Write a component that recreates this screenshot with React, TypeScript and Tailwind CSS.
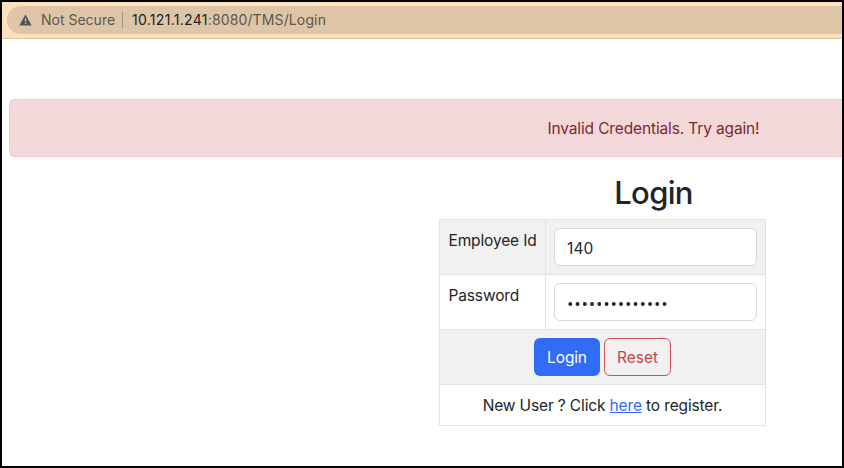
import React from "react";

function AddressBar() {
  return (
    <header className="flex h-[37px] shrink-0 flex-col border-b border-[#dcc4a6] bg-[#ffe0bd] pt-1 pl-[5px]">
      <div className="flex h-7 items-center rounded-l-full bg-[#dec5a7] pl-3 text-[14px] leading-5">
        <svg width="13" height="12" viewBox="0 0 13 12" className="shrink-0">
          <path d="M6.5 0.5 L12.7 11.5 H0.3 Z" fill="#515358" />
          <path d="M5.9 4.2 h1.3 v3.4 h-1.3 z M5.9 8.7 h1.3 v1.4 h-1.3 z" fill="#dec5a7" />
        </svg>
        <span className="ml-[9px] w-[74px] whitespace-nowrap text-[#5a5754]">Not Secure</span>
        <span className="ml-[7px] h-4 w-px bg-[#a09484]" />
        <span className="ml-[9px] whitespace-nowrap text-[#5c554d]">
          <span className="tracking-[0.29px] text-[#202124]">10.121.1.241</span>
          <span className="tracking-[0.13px]">:8080/TMS/Login</span>
        </span>
      </div>
    </header>
  );
}

export default function App() {
  return (
    <div className="flex h-[468px] w-[844px] flex-col overflow-hidden border-2 border-black bg-white font-['Inter',sans-serif] text-[15.5px] leading-6 tracking-[-0.14px] text-[#212529]">
      <div className="tracking-normal">
        <AddressBar />
      </div>
      <main className="flex flex-col">
        <div className="mt-[60px] ml-[7px] flex h-[58px] items-center rounded-l-md border border-r-0 border-[#f1c8cc] bg-[#f3d8da] pt-0.5 pl-[537.5px] text-[#7b2830]">
          <span className="whitespace-nowrap">Invalid Credentials. Try again!</span>
        </div>
        <div className="ml-[437px] flex w-[327px] flex-col">
          <h1 className="mt-[17px] flex h-[38px] items-center justify-center pl-[102px] text-[31px] font-medium tracking-[-0.7px]">
            <span className="whitespace-nowrap">Login</span>
          </h1>
          <table className="mt-[7px] w-[327px] table-fixed border-collapse">
            <colgroup>
              <col className="w-[106px]" />
              <col />
            </colgroup>
            <tbody>
              <tr className="h-[55px] bg-[#f1f1f1]">
                <td className="border border-[#dfe2e6] pt-[9px] pl-[8.5px] align-top whitespace-nowrap">Employee Id</td>
                <td className="border border-[#dfe2e6] px-2">
                  <input
                    defaultValue="140"
                    className="block h-[38px] w-full rounded-md border border-[#d4d9de] bg-white px-3 pt-0.5 tracking-[0.1px] outline-none"
                  />
                </td>
              </tr>
              <tr className="h-[55px]">
                <td className="border border-[#dfe2e6] pt-[9px] pl-[8.5px] align-top whitespace-nowrap">Password</td>
                <td className="border border-[#dfe2e6] px-2">
                  <div className="flex h-[38px] items-center rounded-md border border-[#d4d9de] bg-white pt-[3px] pl-3">
                    <svg width="104" height="6" viewBox="0 0 104 6" fill="#212529">
                      {Array.from({ length: 14 }, (_, i) => (
                        <circle key={i} cx={3.3 + i * 7.25} cy="3" r="1.9" />
                      ))}
                    </svg>
                  </div>
                </td>
              </tr>
              <tr className="h-[55px] bg-[#f1f1f1]">
                <td colSpan={2} className="border border-[#dfe2e6]">
                  <div className="flex justify-center gap-1">
                    <button className="h-[38px] w-[66px] rounded-md bg-[#306cf6] pt-0.5 tracking-[-0.14px] text-white">Login</button>
                    <button className="h-[38px] w-[67px] rounded-md border border-[#d0525a] pt-0.5 tracking-[-0.05px] text-[#c9414e]">Reset</button>
                  </div>
                </td>
              </tr>
              <tr className="h-[41px]">
                <td colSpan={2} className="border border-[#dfe2e6] pt-0.5 text-center whitespace-nowrap">
                  New User ? Click <a className="text-[#306cf6] underline">here</a> to register.
                </td>
              </tr>
            </tbody>
          </table>
        </div>
      </main>
    </div>
  );
}
